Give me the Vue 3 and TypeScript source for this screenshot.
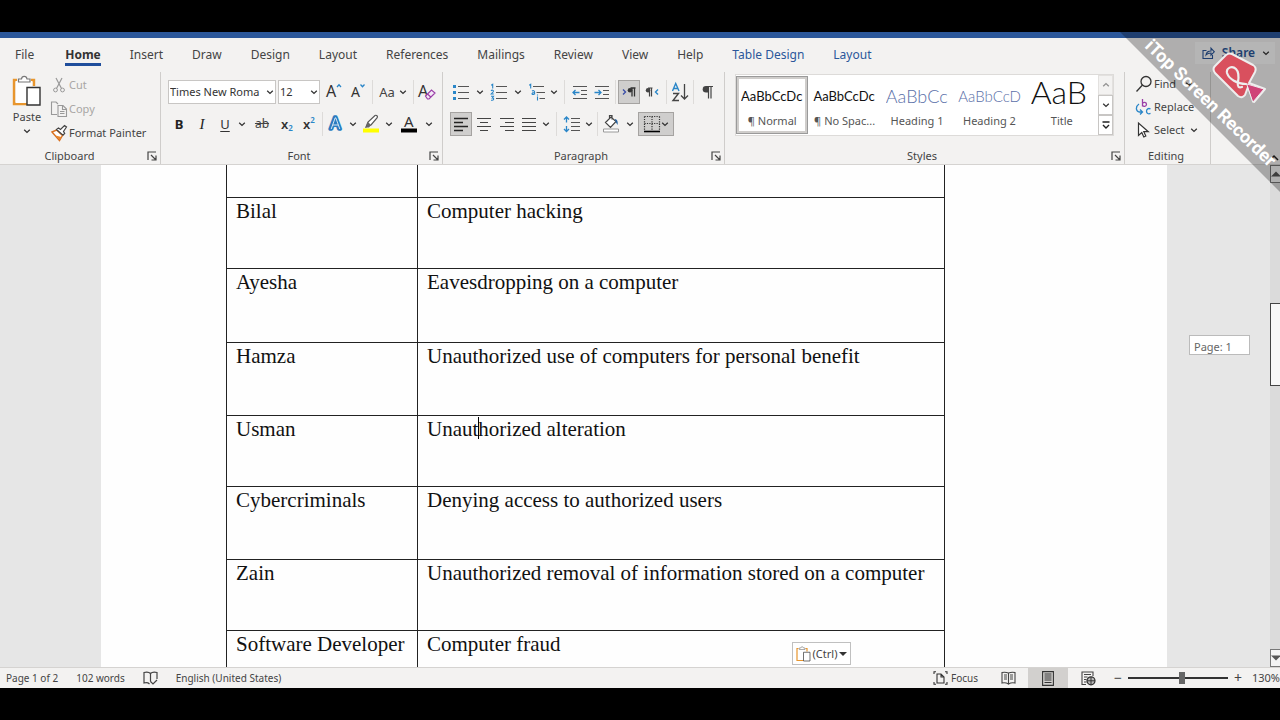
<script setup lang="ts">
import { ref } from 'vue'

interface Tab { name: string; kind?: 'active' | 'context' }
interface Entry { name: string; crime: string; rest?: string; size: 'short' | 'tall' | 'taller' }
interface StyleItem { name: string; sample: string; look: string }

const tabs: Tab[] = [
  { name: 'File' }, { name: 'Home', kind: 'active' }, { name: 'Insert' }, { name: 'Draw' },
  { name: 'Design' }, { name: 'Layout' }, { name: 'References' }, { name: 'Mailings' },
  { name: 'Review' }, { name: 'View' }, { name: 'Help' },
  { name: 'Table Design', kind: 'context' }, { name: 'Layout', kind: 'context' },
]

const styleItems: StyleItem[] = [
  { name: '¶ Normal', sample: 'AaBbCcDc', look: 'body' },
  { name: '¶ No Spac...', sample: 'AaBbCcDc', look: 'body' },
  { name: 'Heading 1', sample: 'AaBbCc', look: 'h1' },
  { name: 'Heading 2', sample: 'AaBbCcD', look: 'h2' },
  { name: 'Title', sample: 'AaB', look: 'title' },
]

const entries: Entry[] = [
  { name: 'Bilal', crime: 'Computer hacking', size: 'short' },
  { name: 'Ayesha', crime: 'Eavesdropping on a computer', size: 'taller' },
  { name: 'Hamza', crime: 'Unauthorized use of computers for personal benefit', size: 'tall' },
  { name: 'Usman', crime: 'Unaut', rest: 'horized alteration', size: 'short' },
  { name: 'Cybercriminals', crime: 'Denying access to authorized users', size: 'tall' },
  { name: 'Zain', crime: 'Unauthorized removal of information stored on a computer', size: 'short' },
  { name: 'Software Developer', crime: 'Computer fraud', size: 'short' },
]

const font = ref('Times New Roma')
const fontSize = ref('12')
const zoom = ref(54)
</script>

<template>
  <div class="screen">
    <svg class="defs" aria-hidden="true">
      <symbol id="chev" viewBox="0 0 8 8"><path d="M1.2 2.8 4 5.4 6.8 2.8" fill="none" stroke="#333" stroke-width="1.3" /></symbol>
      <symbol id="launch" viewBox="0 0 10 10"><path d="M1 9V1h8M4 4l4.5 4.5M9 4.5V9H4.5" fill="none" stroke="#444" stroke-width="1.2" /></symbol>
      <symbol id="clip" viewBox="0 0 30 32">
        <path d="M5 5H2v24h13M19 5h3v6" fill="none" stroke="#e8962e" stroke-width="2.4" />
        <path d="M4 6h16v6h-6v16H4z" fill="#fff" />
        <path d="M6.500 7V4h3c.4-3.500 5-3.500 5.500 0h3v3z" fill="#fff" stroke="#777" stroke-width="1.2" />
        <path d="M15 12.500h13v17.500H15z" fill="#fff" stroke="#333" stroke-width="1.4" />
      </symbol>
    </svg>

    <div class="titlebar"></div>

    <nav class="tabs">
      <button v-for="(t, i) in tabs" :key="i" :class="['tab', t.kind]">{{ t.name }}</button>
      <button class="share">
        <svg width="13" height="12" viewBox="0 0 13 12"><path d="M4.500 3.500H1v8h9.500V8M4 8c.4-3 2.500-4 5-4V1.200L12.300 4.800 9 8.200V6C7 6 5.500 6.300 4 8z" fill="none" stroke="#2b579a" stroke-width="1.1" /></svg>
        Share
        <svg class="chev"><use href="#chev" /></svg>
      </button>
    </nav>

    <div class="ribbon">
      <section class="group clipboard">
        <div class="body">
          <button class="paste">
            <svg width="30" height="32"><use href="#clip" /></svg>
            <span>Paste</span>
            <svg class="chev"><use href="#chev" /></svg>
          </button>
          <div class="cliplist">
            <button class="cmd off">
              <svg width="18" height="18" viewBox="0 0 18 18"><path d="M6 2l5.500 10.500M12 2L6.500 12.500" fill="none" stroke="#999" stroke-width="1.2" /><circle cx="5.500" cy="14" r="1.900" fill="none" stroke="#999" /><circle cx="12.500" cy="14" r="1.900" fill="none" stroke="#999" /></svg>
              Cut
            </button>
            <button class="cmd off">
              <svg width="18" height="18" viewBox="0 0 18 18"><path d="M7 14.500H1.500V2h4.500l2 2M8 5.500h5l3.500 3.500v7.500H8zM12.500 5.500V9.500H16.500M10 11.500h4.500M10 13.500h4.500" fill="none" stroke="#999" stroke-width="1.1" /></svg>
              Copy
            </button>
            <button class="cmd">
              <svg width="18" height="18" viewBox="0 0 18 18"><path d="M2 8l4.500-2 6 5.500-3 5z" fill="#fff" stroke="#d9701e" stroke-width="1.400" /><path d="M5 11.500l5 4.500 1.500-3-4-1z" fill="#e8862e" /><path d="M6.500 5.500l2-1.500 2 1.500L14.500 1.500l2 1.500-3 4.500 1.200 2-1.700 1.700z" fill="#fff" stroke="#444" stroke-width="1.200" /></svg>
              Format Painter
            </button>
          </div>
        </div>
        <footer class="caption"><span>Clipboard</span><svg class="launch"><use href="#launch" /></svg></footer>
      </section>

      <section class="group font">
        <div class="body rows">
          <div class="row">
            <label class="combo w108">
              <select v-model="font" aria-label="Font"><option>Times New Roma</option></select>
              <svg class="chev"><use href="#chev" /></svg>
            </label>
            <label class="combo w42">
              <select v-model="fontSize" aria-label="Font size"><option>12</option></select>
              <svg class="chev"><use href="#chev" /></svg>
            </label>
            <button class="tool w24" aria-label="Grow font"><svg width="20" height="20" viewBox="0 0 20 20"><text x="2" y="15" font-size="16" fill="#333">A</text><path d="M13 5l2-2.200L17 5" fill="none" stroke="#2a86c8" stroke-width="1.300" /></svg></button>
            <button class="tool w24" aria-label="Shrink font"><svg width="20" height="20" viewBox="0 0 20 20"><text x="3" y="15" font-size="14" fill="#333">A</text><path d="M12.500 2.500l2 2.200 2-2.200" fill="none" stroke="#2a86c8" stroke-width="1.300" /></svg></button>
            <i class="sep"></i>
            <button class="tool w36 case">Aa<svg class="chev"><use href="#chev" /></svg></button>
            <i class="sep"></i>
            <button class="tool w22" aria-label="Clear formatting"><svg width="20" height="20" viewBox="0 0 20 20"><text x="1" y="15" font-size="16" fill="#333">A</text><path d="M8.500 14l6-6 3.500 3-6 6h-1.500zM10.500 12l3.500 3.200" fill="#f3e8f5" stroke="#9b3fa8" stroke-width="1.200" /></svg></button>
          </div>
          <div class="row">
            <button class="tool w22 b">B</button>
            <button class="tool w24 i">I</button>
            <button class="tool w22 u">U</button>
            <button class="tool w12" aria-label="Underline style"><svg class="chev"><use href="#chev" /></svg></button>
            <button class="tool w28 s">ab</button>
            <button class="tool w22 x">x<sub>2</sub></button>
            <button class="tool w22 x">x<sup>2</sup></button>
            <i class="sep"></i>
            <button class="tool w22" aria-label="Text effects"><svg width="20" height="20" viewBox="0 0 20 20"><text x="4" y="15" font-size="16" fill="#fff" stroke="#2b7cc0" stroke-width="3.500" stroke-linejoin="round">A</text><path d="M5.200 15l4-11.200h.6l4 11.200M6.800 11h5.400" fill="none" stroke="#fff" stroke-width=".8" /></svg></button>
            <button class="tool w12" aria-label="Text effect options"><svg class="chev"><use href="#chev" /></svg></button>
            <button class="tool w24" aria-label="Highlight"><svg width="20" height="20" viewBox="0 0 20 20"><path d="M5 13l2-5 7-6.500c1.500-.8 3 .7 2.200 2.200L10 11z" fill="#fff" stroke="#555" stroke-width="1.200" /><path d="M4.500 13.500L7 8l3 3-2 2.500z" fill="#666" /><path d="M2 14.500h16v4H2z" fill="#ffff00" /></svg></button>
            <button class="tool w12" aria-label="Highlight color"><svg class="chev"><use href="#chev" /></svg></button>
            <button class="tool w28" aria-label="Font color"><svg width="20" height="20" viewBox="0 0 20 20"><text x="5" y="12.500" font-size="15" fill="#333">A</text><path d="M2 14.500h16v4H2z" fill="#000" /></svg></button>
            <button class="tool w12" aria-label="Font color options"><svg class="chev"><use href="#chev" /></svg></button>
          </div>
        </div>
        <footer class="caption"><span>Font</span><svg class="launch"><use href="#launch" /></svg></footer>
      </section>

      <section class="group para">
        <div class="body rows">
          <div class="row">
            <button class="tool w22" aria-label="Bullets"><svg width="18" height="18" viewBox="0 0 18 18"><path d="M1 2h3v3H1zM1 8h3v3H1zM1 14h3v3H1z" fill="#2a86c8" /><path d="M6 3.500h11M6 9.500h11M6 15.500h11" stroke="#555" stroke-width="1.200" /></svg></button>
            <button class="tool w16" aria-label="Bullet library"><svg class="chev"><use href="#chev" /></svg></button>
            <button class="tool w22" aria-label="Numbering"><svg width="18" height="18" viewBox="0 0 18 18"><path d="M1.200 2.200l1.500-1V5.500M1 7.800c1-1.200 2.800-.6 2.400.7L1.200 11h2.600M1 13.300h2.500L2.300 15c1.800-.2 1.800 2.300 0 2.300H1" fill="none" stroke="#2a86c8" stroke-width="1.100" /><path d="M6 3.500h11M6 9.500h11M6 15.500h11" stroke="#555" stroke-width="1.200" /></svg></button>
            <button class="tool w16" aria-label="Numbering library"><svg class="chev"><use href="#chev" /></svg></button>
            <button class="tool w22" aria-label="Multilevel list"><svg width="18" height="18" viewBox="0 0 18 18"><path d="M1.200 2.200l1.500-1V5.500M4 8c1.200-.8 2.600-.4 2.600 1v2.500M6.600 9.500c-3-.2-3.200 2-1.600 2 1 0 1.600-.6 1.600-1.200M9.500 13.500v4M9.500 11.500v1" fill="none" stroke="#2a86c8" stroke-width="1.100" /><path d="M5 3.500h11M8.500 9.500H17M11.500 15.500H17" stroke="#555" stroke-width="1.200" /></svg></button>
            <button class="tool w12" aria-label="Multilevel library"><svg class="chev"><use href="#chev" /></svg></button>
            <i class="sep wide"></i>
            <button class="tool w22" aria-label="Decrease indent"><svg width="18" height="18" viewBox="0 0 18 18"><path d="M2 3.500h14M10 7.500h6M10 11.500h6M2 15.500h14" stroke="#555" stroke-width="1.200" /><path d="M8.500 9.500H2M4.500 7L2 9.500 4.500 12" fill="none" stroke="#2a86c8" stroke-width="1.300" /></svg></button>
            <button class="tool w22" aria-label="Increase indent"><svg width="18" height="18" viewBox="0 0 18 18"><path d="M2 3.500h14M10 7.500h6M10 11.500h6M2 15.500h14" stroke="#555" stroke-width="1.200" /><path d="M1.500 9.500H8M5.500 7L8 9.500 5.500 12" fill="none" stroke="#2a86c8" stroke-width="1.300" /></svg></button>
            <i class="sep"></i>
            <button class="tool w22 on" aria-label="Left-to-right"><svg width="16" height="18" viewBox="0 0 16 18"><path d="M2 6.500L4.500 9 2 11.500" fill="none" stroke="#3b4fa8" stroke-width="1.400" /><path d="M13.500 5v8.500M11 5v8.500M14.500 5H9.500" fill="none" stroke="#333" stroke-width="1.300" /><circle cx="9" cy="7.200" r="2.300" fill="#333" /></svg></button>
            <button class="tool w24" aria-label="Right-to-left"><svg width="16" height="18" viewBox="0 0 16 18"><path d="M14 6.500L11.500 9 14 11.500" fill="none" stroke="#2a86c8" stroke-width="1.400" /><path d="M7.500 5v8.500M5.500 5v8.500M8.500 5H4" fill="none" stroke="#444" stroke-width="1.200" /><circle cx="4" cy="7.200" r="2.200" fill="#444" /></svg></button>
            <i class="sep"></i>
            <button class="tool w22" aria-label="Sort"><svg width="18" height="20" viewBox="0 0 18 20"><path d="M1.500 9L4.700 1.500 8 9M2.700 6.500h4" fill="none" stroke="#2a86c8" stroke-width="1.400" /><path d="M2 11.500h5.500L2 18.500h6" fill="none" stroke="#444" stroke-width="1.400" /><path d="M13.500 2v15M10 13.500l3.500 3.500 3.500-3.500" fill="none" stroke="#444" stroke-width="1.300" /></svg></button>
            <i class="sep"></i>
            <button class="tool w22" aria-label="Show paragraph marks"><svg width="16" height="18" viewBox="0 0 16 18"><path d="M9.500 3v12.500M12 3v12.500M14 3.500H7" fill="none" stroke="#444" stroke-width="1.200" /><path d="M9.500 3H7a3.300 3.300 0 0 0 0 6.600h2.500z" fill="#444" /></svg></button>
          </div>
          <div class="row">
            <button class="tool w22 on" aria-label="Align left"><svg width="18" height="18" viewBox="0 0 18 18"><path d="M2 3.500h14M2 7.500h9M2 11.500h14M2 15.500h9" stroke="#222" stroke-width="1.300" /></svg></button>
            <button class="tool w24" aria-label="Center"><svg width="18" height="18" viewBox="0 0 18 18"><path d="M2 3.500h14M5 7.500h8M2 11.500h14M5 15.500h8" stroke="#444" stroke-width="1.200" /></svg></button>
            <button class="tool w22" aria-label="Align right"><svg width="18" height="18" viewBox="0 0 18 18"><path d="M2 3.500h14M7 7.500h9M2 11.500h14M7 15.500h9" stroke="#444" stroke-width="1.200" /></svg></button>
            <button class="tool w22" aria-label="Justify"><svg width="18" height="18" viewBox="0 0 18 18"><path d="M2 3.500h14M2 7.500h14M2 11.500h14M2 15.500h14" stroke="#444" stroke-width="1.200" /></svg></button>
            <button class="tool w12" aria-label="Justify options"><svg class="chev"><use href="#chev" /></svg></button>
            <i class="sep wide"></i>
            <button class="tool w22" aria-label="Line spacing"><svg width="18" height="18" viewBox="0 0 18 18"><path d="M8 3.500h9M8 7.500h9M8 11.500h9M8 15.500h9" stroke="#555" stroke-width="1.200" /><path d="M3.500 2v5.500M3.500 11v5.500M1 4.500L3.500 2 6 4.500M1 14l2.500 2.500L6 14" fill="none" stroke="#2a86c8" stroke-width="1.300" /></svg></button>
            <button class="tool w12" aria-label="Line spacing options"><svg class="chev"><use href="#chev" /></svg></button>
            <i class="sep"></i>
            <button class="tool w22" aria-label="Shading"><svg width="20" height="20" viewBox="0 0 20 20"><path d="M4.500 8.500L10 3l5 4.500-5.500 6zM8.500 4.500V1.500h2.500v4" fill="#fff" stroke="#444" stroke-width="1.200" /><path d="M14 5c2.500.5 3 3 2.500 6l-2-3.500z" fill="#1f5f9e" /><path d="M2.500 15h15v3h-15z" fill="#fff" stroke="#999" /></svg></button>
            <button class="tool w16" aria-label="Shading color"><svg class="chev"><use href="#chev" /></svg></button>
            <button class="tool w36 on" aria-label="Borders"><svg width="18" height="18" viewBox="0 0 18 18"><path d="M1.500 1.500h15M1.500 1.500v14M16.500 1.500v14M9 1.500v14M1.500 8.500h15" stroke="#333" stroke-width="1.200" stroke-dasharray="1.200 1.200" /><path d="M1 16.500h16" stroke="#000" stroke-width="1.600" /></svg><svg class="chev"><use href="#chev" /></svg></button>
          </div>
        </div>
        <footer class="caption"><span>Paragraph</span><svg class="launch"><use href="#launch" /></svg></footer>
      </section>

      <section class="group styles">
        <div class="gallery">
          <button v-for="(s, i) in styleItems" :key="i" :class="['style', { picked: i === 0 }]">
            <span :class="['sample', s.look]">{{ s.sample }}</span>
            <span class="stylename">{{ s.name }}</span>
          </button>
          <div class="scroller">
            <button class="up" aria-label="Previous styles"><svg class="chev flip"><use href="#chev" /></svg></button>
            <button aria-label="Next styles"><svg class="chev"><use href="#chev" /></svg></button>
            <button aria-label="More styles"><svg width="10" height="10" viewBox="0 0 10 10"><path d="M1.500 2h7M2 5l3 3 3-3" fill="none" stroke="#222" stroke-width="1.400" /></svg></button>
          </div>
        </div>
        <footer class="caption"><span>Styles</span><svg class="launch"><use href="#launch" /></svg></footer>
      </section>

      <section class="group editing">
        <div class="cliplist">
          <button class="cmd"><svg width="18" height="18" viewBox="0 0 18 18"><circle cx="11" cy="6.500" r="5" fill="none" stroke="#333" stroke-width="1.300" /><path d="M7.500 10L1.500 16.500" stroke="#333" stroke-width="1.300" /></svg>Find<svg class="chev far"><use href="#chev" /></svg></button>
          <button class="cmd"><svg width="18" height="18" viewBox="0 0 18 18"><path d="M7.500 1v7.500M7.500 5.500c.8-1.800 4-1.600 4 .8s-3.200 2.600-4 .9" fill="none" stroke="#9b3fa8" stroke-width="1.300" /><path d="M15.500 11c-2-1.200-4 0-4 2.200s2 3.200 4 2.200" fill="none" stroke="#2a86c8" stroke-width="1.300" /><path d="M4 6c-3.500 2.500-3.500 6.500 0 8h3M5 11.500L7.500 14 5 16.500" fill="none" stroke="#2a86c8" stroke-width="1.300" /></svg>Replace</button>
          <button class="cmd"><svg width="18" height="18" viewBox="0 0 18 18"><path d="M3.500 2v12.500l3.300-3 2 4.500 2-1-2-4.300h4.500z" fill="#fff" stroke="#333" stroke-width="1.200" /></svg>Select<svg class="chev"><use href="#chev" /></svg></button>
        </div>
        <footer class="caption"><span>Editing</span></footer>
      </section>
      <button class="collapse" aria-label="Collapse ribbon"><svg width="10" height="8" viewBox="0 0 10 8"><path d="M1 6l4-4 4 4" fill="none" stroke="#222" stroke-width="1.500" /></svg></button>
    </div>

    <main class="workspace">
      <article class="page">
        <table class="crimes">
          <tbody>
            <tr class="first"><td></td><td></td></tr>
            <tr v-for="e in entries" :key="e.name" :class="e.size">
              <td>{{ e.name }}</td>
              <td>{{ e.crime }}<template v-if="e.rest"><i class="caret"></i>{{ e.rest }}</template></td>
            </tr>
          </tbody>
        </table>
        <button class="ctrl"><svg width="15" height="16"><use href="#clip" /></svg>(Ctrl)<svg width="8" height="6" viewBox="0 0 8 6"><path d="M0 1h8L4 5z" fill="#333" /></svg></button>
      </article>
      <div class="pagetip">Page: 1</div>
      <div class="scrollbar">
        <button aria-label="Scroll up"><svg width="10" height="6" viewBox="0 0 10 6"><path d="M0 5.500h10L5 .5z" fill="#555" /></svg></button>
        <div class="thumb"></div>
        <button aria-label="Scroll down"><svg width="10" height="6" viewBox="0 0 10 6"><path d="M0 .5h10L5 5.500z" fill="#555" /></svg></button>
      </div>
    </main>

    <footer class="status">
      <span>Page 1 of 2</span>
      <span>102 words</span>
      <svg width="15" height="14" viewBox="0 0 15 14"><path d="M7.500 2.500v8M7.500 2.500C6 1 3 1 1 1.500v10.500c2-.5 4-.5 5.500 1M7.500 2.500C9 1 12 1 14 1.500V8M7.500 10.500l2.500 2.500 4-4" fill="none" stroke="#444" stroke-width="1.200" /></svg>
      <span>English (United States)</span>
      <div class="views">
        <button class="focus"><svg width="15" height="14" viewBox="0 0 15 14"><path d="M4 3h4l3 3v6H4zM8 3v3h3M3 .8H1V3M12 .8h2V3M3 13.200H1V11M12 13.200h2V11" fill="none" stroke="#333" stroke-width="1.100" /></svg>Focus</button>
        <button class="view" aria-label="Read mode"><svg width="15" height="14" viewBox="0 0 15 14"><path d="M7.500 2v11C5 11.500 3 11.500 1 12V1.500C3 1 5 1 7.500 2 10 1 12 1 14 1.500V12c-2-.5-4-.5-6.500 1M3 4h3M3 6h3M3 8h3M9 4h3M9 6h3M9 8h3" fill="none" stroke="#444" stroke-width="1.100" /></svg></button>
        <button class="view on" aria-label="Print layout"><svg width="12" height="15" viewBox="0 0 12 15"><path d="M.6.6h10.800v13.800H.6zM2.500 3h7M2.500 5h7M2.500 7h7M2.500 9h7M2.500 11.500h7" fill="none" stroke="#333" stroke-width="1.100" /></svg></button>
        <button class="view" aria-label="Web layout"><svg width="15" height="15" viewBox="0 0 15 15"><path d="M5 13.500H1V1h11v4M3 3.500h7M3 6h3.500M3 8.500h2.500M3 11h2.500" fill="none" stroke="#444" stroke-width="1.100" /><circle cx="10" cy="9.800" r="4" fill="#bbb" stroke="#333" stroke-width="1.200" /><path d="M6 9.800h8M10 6v8" stroke="#333" /></svg></button>
        <button class="step" aria-label="Zoom out">−</button>
        <input v-model="zoom" type="range" min="0" max="100" aria-label="Zoom" />
        <button class="step" aria-label="Zoom in">+</button>
        <span class="percent">130%</span>
      </div>
    </footer>

    <svg class="ribbonmark" width="180" height="200" viewBox="0 0 180 200">
      <path d="M20 32H180V192z" fill="#000" fill-opacity=".28" />
      <text class="marktext" transform="translate(44 47) rotate(44)">iTop Screen Recorder</text>
      <g stroke="#eee" stroke-linejoin="round" stroke-linecap="round">
        <path d="M115 66l11-11q3-2.500 6-1l21 11q4 2.500 2 7l-6 11 16 6-11 13-6-15-3 8q-3 4-7 1l-23-23q-3-4 0-7z" fill="#d9505e" stroke-width="2" />
        <path d="M147 84l17 5-11 13z" fill="#cf4478" stroke-width="1" />
        <path d="M146 84c-9 0-17-5-19-11-1-5 5-8 9-4 3 3 3 7 2 13-1 5 1 6 4 5" fill="none" stroke-width="2.200" />
      </g>
    </svg>
  </div>
</template>

<style>
html { background: #000; }
body { overflow: hidden; }
</style>

<style scoped>
.screen { position: relative; box-sizing: border-box; height: 100vh; padding: 32px 0; display: flex; flex-direction: column; overflow: hidden; background: #000; color: #444; font: 12px/16px "Noto Sans", sans-serif; }
.screen *, .screen *::before { box-sizing: border-box; }
.defs { position: absolute; width: 0; height: 0; }
button { border: 0; margin: 0; padding: 0; background: none; color: inherit; font: inherit; white-space: nowrap; }
svg { flex: none; display: block; overflow: visible; }
.chev { width: 8px; height: 8px; }
.flip { transform: rotate(180deg); opacity: .5; }
.launch { width: 10px; height: 10px; }

.titlebar { flex: none; height: 6px; background: #2b579a; }
.tabs { flex: none; height: 34px; padding: 4px 5px 0 15px; display: flex; gap: 29px; align-items: flex-start; background: #f3f2f1; }
.tab { height: 24px; line-height: 26px; }
.tab.active { margin-left: 2px; font-weight: 700; box-shadow: inset 0 -3px #1f4e9c; color: #333; }
.tab.context { color: #2b579a; }
.share { margin-left: auto; width: 80px; height: 22px; display: flex; align-items: center; justify-content: space-between; padding: 0 5px 0 7px; background: #fbfbfb; color: #2b579a; font-weight: 600; }

.ribbon { flex: none; height: 93px; display: flex; background: #f3f2f1; border-bottom: 1px solid #d5d3d1; }
.group { flex: none; height: 92px; display: flex; flex-direction: column; border-right: 1px solid #cfcdcb; }
.clipboard { width: 161px; }
.font { width: 282px; }
.para { width: 282px; }
.styles { width: 400px; }
.editing { width: 86px; }
.body { display: flex; }
.rows { flex-direction: column; gap: 8px; padding: 8px 0 0 7px; }
.row { display: flex; align-items: center; height: 24px; }
.caption { margin-top: auto; height: 16px; padding: 0 3px 0 0; display: flex; align-items: center; font-size: 11px; }
.caption span { flex: 1; text-align: center; padding-left: 8px; }
.clipboard .caption span { padding-left: 0; padding-right: 8px; }
.editing .caption span { padding-left: 0; }

.paste { width: 38px; margin: 3px 0 0 8px; display: flex; flex-direction: column; align-items: center; gap: 2px; font-size: 11px; }
.cliplist { display: flex; flex-direction: column; margin: 1px 0 0 4px; }
.cmd { height: 24px; display: flex; align-items: center; gap: 1px; font-size: 11px; }
.cmd.off { color: #a8a6a4; }
.editing .cliplist { margin: 0 0 0 10px; }
.editing .cmd { height: 23px; }
.editing .chev { margin-left: 4px; }
.editing .chev.far { margin-left: 8px; }

.combo { flex: none; display: flex; align-items: center; height: 24px; margin-right: 2px; padding-right: 1px; border: 1px solid #c8c6c4; background: #fff; }
select { flex: 1; min-width: 0; height: 22px; padding: 0 0 0 1px; border: 0; background: none; appearance: none; color: #333; font: inherit; font-size: 11px; }
.tool { flex: none; height: 24px; display: flex; align-items: center; justify-content: center; }
.tool svg text { font-family: "Noto Sans", sans-serif; }
.on { background: #cfcecd; box-shadow: inset 0 0 0 1px #a5a3a1; }
.sep { flex: none; width: 1px; height: 24px; margin: 0 2px; background: #dddbd9; }
.sep.wide { margin: 0 4px; }
.w12 { width: 12px; } .w16 { width: 16px; } .w22 { width: 22px; } .w24 { width: 24px; }
.w28 { width: 28px; } .w36 { width: 36px; } .w42 { width: 42px; } .w108 { width: 108px; }
.case { gap: 4px; font-size: 13px; }
.b { font-weight: 700; font-size: 13px; color: #222; }
.i { font: italic 15px "Liberation Serif", serif; color: #222; }
.u { text-decoration: underline; text-underline-offset: 2px; font-size: 13px; color: #333; }
.s { text-decoration: line-through; font-size: 12px; }
.x { font-size: 13px; font-weight: 600; color: #333; }
.x sub, .x sup { font-size: 8px; line-height: 8px; color: #2a86c8; }
.x sub { align-self: flex-end; margin-bottom: 4px; }
.x sup { align-self: flex-start; margin-top: 4px; }

.gallery { height: 62px; margin: 2px 10px 0; display: flex; background: #fff; border: 1px solid #dddbd9; }
.style { flex: 1 1 0; min-width: 0; height: 58px; margin-top: 1px; padding: 0 5px; display: flex; flex-direction: column; color: #555; }
.style.picked { box-shadow: inset 0 0 0 1px #9a9a9a, inset 0 0 0 3px #cfcdcb; }
.sample { height: 37px; line-height: 40px; overflow: hidden; text-align: left; font-family: Lato, sans-serif; color: #111; }
.stylename { line-height: 16px; text-align: center; font-size: 11px; }
.sample.body { font-size: 13px; display: block; }
.sample.h1 { font-size: 18px; color: #5a6fa8; font-weight: 300; }
.sample.h2 { font-size: 15px; color: #5a6fa8; font-weight: 300; }
.sample.title { font-size: 32px; font-weight: 300; line-height: 32px; }
.scroller { width: 15px; display: flex; flex-direction: column; }
.scroller button { flex: 1; display: flex; align-items: center; justify-content: center; border: 1px solid #c8c6c4; }
.scroller .up { border-color: #e3e1df; background: #f3f2f1; }
.collapse { margin: 82px 1px 0 auto; height: 8px; }

.workspace { flex: 1; min-height: 0; position: relative; display: flex; background: #e6e6e6; overflow: hidden; }
.page { position: relative; flex: 1; margin: 0 103px 0 101px; padding-left: 125px; background: #fefefe; }
.crimes { width: 719px; table-layout: fixed; border-collapse: collapse; color: #111; font: 21px/24px "Liberation Serif", serif; }
.crimes td { border: 1px solid #222; padding: 1px 9px 0; vertical-align: top; white-space: nowrap; }
.crimes td:first-child { width: 191px; }
.first { height: 32px; }
.first td { border-top: 0; }
.short { height: 71px; }
.tall { height: 73px; }
.taller { height: 74px; }
.caret { position: absolute; width: 1px; height: 22px; background: #000; }
.ctrl { position: absolute; left: 691px; bottom: 2px; width: 59px; height: 23px; display: flex; align-items: center; justify-content: center; gap: 2px; border: 1px solid #c0c0c0; background: #fff; font-size: 11px; }
.pagetip { position: absolute; right: 30px; top: 170px; width: 61px; height: 20px; padding: 2px 4px 0; line-height: 18px; font-size: 11px; color: #666; background: #fff; border: 1px solid #bbb; }
.scrollbar { flex: none; width: 10px; display: flex; flex-direction: column; background: #dbdbdb; }
.scrollbar button { height: 18px; flex: none; display: flex; align-items: center; background: #f3f3f3; border: 1px solid #777; border-right: 0; overflow: hidden; }
.thumb { height: 83px; margin: 120px 0 auto; background: #f8f8f8; border: 1px solid #444; border-right: 0; }

.status { flex: none; height: 21px; padding-left: 6px; display: flex; align-items: center; gap: 18px; background: #f3f2f1; border-top: 1px solid #d5d3d1; font-size: 10px; }
.views { margin-left: auto; display: flex; align-items: center; }
.focus { margin-right: 10px; display: flex; align-items: center; gap: 3px; }
.view { width: 40px; height: 20px; display: flex; align-items: center; justify-content: center; }
.view.on { background: #d2d0ce; box-shadow: none; }
.step { width: 20px; font-size: 14px; }
input[type=range] { width: 100px; height: 16px; margin: 0; appearance: none; background: linear-gradient(#333, #333) center / 100% 2px no-repeat; }
input[type=range]::-webkit-slider-thumb { appearance: none; width: 6px; height: 12px; background: #666; }
.percent { width: 32px; text-align: right; font-size: 11px; }

.ribbonmark { position: absolute; top: 0; right: 0; pointer-events: none; }
.marktext { font: 700 18px Roboto, sans-serif; fill: #fff; }
</style>
